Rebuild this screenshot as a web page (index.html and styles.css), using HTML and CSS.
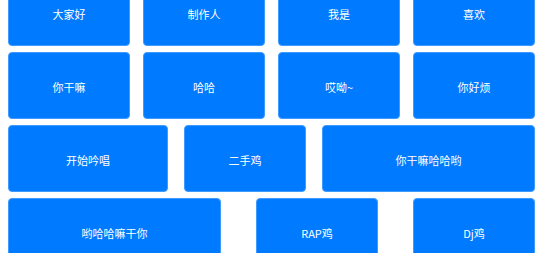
FILE: index.html
```html
<!DOCTYPE html>
<html lang="zh-CN">
<head>
<meta charset="utf-8">
<title>Grid</title>
<link rel="stylesheet" href="styles.css">
</head>
<body>
<div class="wall">
  <div class="row">
    <div class="tile w122">大家好</div>
    <div class="tile w122">制作人</div>
    <div class="tile w122">我是</div>
    <div class="tile w122">喜欢</div>
  </div>
  <div class="row">
    <div class="tile w122">你干嘛</div>
    <div class="tile w122">哈哈</div>
    <div class="tile w122">哎呦~</div>
    <div class="tile w122">你好烦</div>
  </div>
  <div class="row">
    <div class="tile w160">开始吟唱</div>
    <div class="tile w122">二手鸡</div>
    <div class="tile w213">你干嘛哈哈哟</div>
  </div>
  <div class="row">
    <div class="tile w213">哟哈哈嘛干你</div>
    <div class="tile w122">RAP鸡</div>
    <div class="tile w122">Dj鸡</div>
  </div>
</div>
</body>
</html>
```
FILE: styles.css
```css
html, body {
  margin: 0;
  padding: 0;
  background: #ffffff;
  overflow: hidden;
}
body {
  font-family: "Noto Sans CJK SC", "Noto Sans", sans-serif;
}
.wall {
  width: 527px;
  margin: -21px 0 0 8px;
  display: flex;
  flex-direction: column;
  gap: 6px;
}
.row {
  display: flex;
  justify-content: space-between;
}
.tile {
  box-sizing: border-box;
  height: 67px;
  padding-top: 2px;
  background: #007aff;
  border: 1px solid #3f9bff;
  border-radius: 4px;
  color: #ffffff;
  font-size: 11px;
  display: flex;
  align-items: center;
  justify-content: center;
}
.w122 { width: 122px; }
.w160 { width: 160px; }
.w213 { width: 213px; }
```
